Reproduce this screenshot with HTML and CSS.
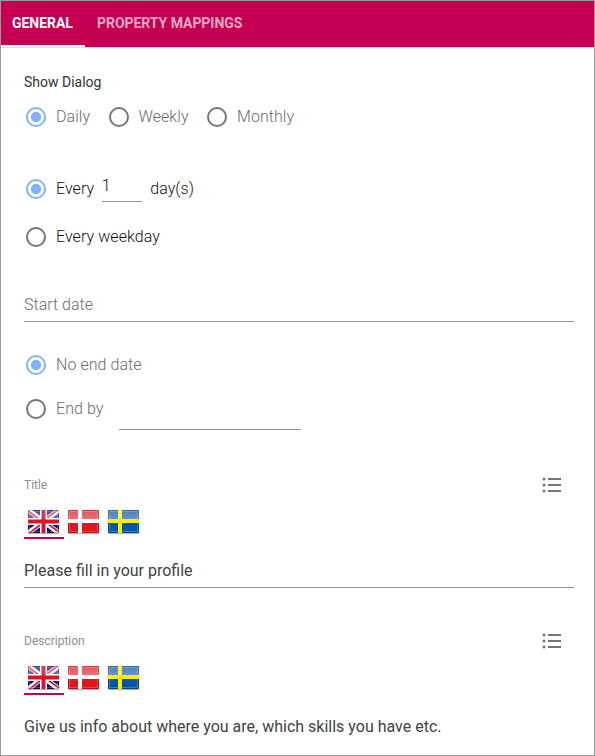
FILE: index.html
```html
<!DOCTYPE html>
<html lang="en">
<head>
<meta charset="utf-8">
<title>Show Dialog</title>
<link rel="stylesheet" href="styles.css">
</head>
<body>
<svg width="0" height="0" class="defs">
  <defs>
    <linearGradient id="gloss" x1="0" y1="0" x2="0" y2="1">
      <stop offset="0" stop-color="#fff" stop-opacity=".25"/>
      <stop offset="1" stop-color="#fff" stop-opacity=".42"/>
    </linearGradient>
    <symbol id="shine" viewBox="0 0 31 23">
      <path d="M0 0h31v11H0z" fill="url(#gloss)"/>
      <path d="M1.5 1.5h28v20h-28z" fill="none" stroke="#fff" stroke-opacity=".22"/>
      <path d="M.5 .5h30v22H.5z" fill="none" stroke="#000" stroke-opacity=".2"/>
    </symbol>
    <symbol id="uk" viewBox="0 0 31 23">
      <path d="M0 0h31v23H0z" fill="#0b0b78"/>
      <path d="M0 0L31 23M31 0L0 23" stroke="#fff" stroke-width="5"/>
      <path d="M0 1L13 10.5M31 22L18 12.500M29.500 0L17 9.500M1.500 23L14 13.500" stroke="#d8142c" stroke-width="1.700"/>
      <use href="#shine"/>
      <path d="M15.500 0v23M0 11.500h31" stroke="#fff" stroke-width="7"/>
      <path d="M15.500 0v23M0 11.500h31" stroke="#d8142c" stroke-width="4"/>
      <path d="M13.500 0h4v9h-4z" fill="#fff" fill-opacity=".15"/>
    </symbol>
    <symbol id="dk" viewBox="0 0 31 23">
      <path d="M0 0h31v23H0z" fill="#e0161f"/>
      <use href="#shine"/>
      <path d="M12 0v23M0 11h31" stroke="#fff" stroke-width="4"/>
    </symbol>
    <symbol id="se" viewBox="0 0 31 23">
      <path d="M0 0h31v23H0z" fill="#0755a5"/>
      <use href="#shine"/>
      <path d="M12 0v23M0 11h31" stroke="#ffed00" stroke-width="4"/>
      <path d="M10 0h4v9h-4z" fill="#fff" fill-opacity=".25"/>
    </symbol>
    <symbol id="list" viewBox="0 0 20 16">
      <path d="M6 2h13M6 8h13M6 14h13" stroke="#757575" stroke-width="2"/>
      <g fill="#757575"><circle cx="2" cy="2" r="1.500"/><circle cx="2" cy="8" r="1.500"/><circle cx="2" cy="14" r="1.500"/></g>
    </symbol>
  </defs>
</svg>
<div class="dialog">
  <nav class="tabs">
    <div class="tab active">GENERAL</div>
    <div class="tab">PROPERTY MAPPINGS</div>
  </nav>
  <main class="form">
    <h2 class="heading">Show Dialog</h2>
    <div class="frequency muted">
      <label class="choice"><i class="radio on"></i>Daily</label>
      <label class="choice weekly"><i class="radio"></i>Weekly</label>
      <label class="choice"><i class="radio"></i>Monthly</label>
    </div>
    <div class="choice every"><i class="radio on"></i>Every<span class="count">1</span>day(s)</div>
    <label class="choice weekday"><i class="radio"></i>Every weekday</label>
    <div class="field start muted">Start date</div>
    <label class="choice no-end muted"><i class="radio on"></i>No end date</label>
    <div class="choice end-by muted"><i class="radio"></i>End by<span class="end-date"></span></div>
    <section class="localized">
      <div class="caption"><span>Title</span><svg class="list"><use href="#list"/></svg></div>
      <div class="flags">
        <span class="flag selected"><svg><use href="#uk"/></svg></span>
        <span class="flag"><svg><use href="#dk"/></svg></span>
        <span class="flag"><svg><use href="#se"/></svg></span>
      </div>
      <div class="field value">Please fill in your profile</div>
    </section>
    <section class="localized">
      <div class="caption"><span>Description</span><svg class="list"><use href="#list"/></svg></div>
      <div class="flags">
        <span class="flag selected"><svg><use href="#uk"/></svg></span>
        <span class="flag"><svg><use href="#dk"/></svg></span>
        <span class="flag"><svg><use href="#se"/></svg></span>
      </div>
      <div class="field value last">Give us info about where you are, which skills you have etc.</div>
    </section>
  </main>
</div>
</body>
</html>
```
FILE: styles.css
```css
* { box-sizing: border-box; }
body { margin: 0; font: 300 16px/20px Roboto, sans-serif; color: #111; }
.defs { display: block; }
.dialog { width: 595px; height: 756px; border: 1px solid #999; background: #fff; overflow: hidden; }
.tabs { display: flex; height: 47px; background: #c50052; border-bottom: 1px solid #ddd; }
.tab { padding: 0 12px; font-size: 14px; line-height: 44px; font-weight: 700; letter-spacing: -.04px; color: #eda6c4; border-bottom: 2px solid transparent; }
.tab.active { width: 84px; padding-left: 11px; padding-right: 0; color: #fff; border-color: #fff; }
.form { padding: 24px 20px 0 23px; }
.heading { margin: 0; font-size: 14px; line-height: 20px; font-weight: 400; color: #333; }
.muted { color: #6c6c6c; }
.choice { display: flex; align-items: center; height: 20px; letter-spacing: .06px; }
.radio { flex: none; width: 20px; height: 20px; margin: 0 10px 0 2px; border: 2px solid #757575; border-radius: 50%; }
.radio.on { border-color: #82b1ff; background: radial-gradient(circle, #82b1ff 4.700px, transparent 5.500px); }
.frequency { display: flex; margin-top: 15px; }
.frequency .choice { width: 82.500px; }
.frequency .weekly { width: 98.500px; }
.every { margin-top: 52px; }
.count { width: 40px; height: 26px; margin: 0 8.500px 1px 7.500px; border-bottom: 1px solid #949494; }
.weekday { margin-top: 28px; }
.field { border-bottom: 1px solid #949494; }
.start { margin-top: 48px; height: 27px; }
.no-end { margin-top: 33px; }
.end-by { margin-top: 24px; }
.end-date { width: 182px; height: 1px; margin: 41px 0 0 16px; background: #949494; }
.localized { height: 156px; }
.end-by + .localized { margin-top: 56px; }
.caption { display: flex; align-items: center; justify-content: space-between; height: 20px; padding-right: 12px; font-size: 12px; font-weight: 400; color: #909090; }
.list { width: 20px; height: 16px; }
.flags { display: flex; margin-top: 10px; height: 34px; }
.flag { width: 40px; padding: 5px 0 0 4px; border-bottom: 2px solid transparent; }
.flag.selected { border-color: #c50052; }
.flag svg { display: block; width: 31px; height: 23px; border-radius: 1px; box-shadow: 0 1px 1px #aaa; }
.value { margin-top: 22px; height: 27px; font-weight: 400; color: #424242; }
.last { border: 0; }
```
